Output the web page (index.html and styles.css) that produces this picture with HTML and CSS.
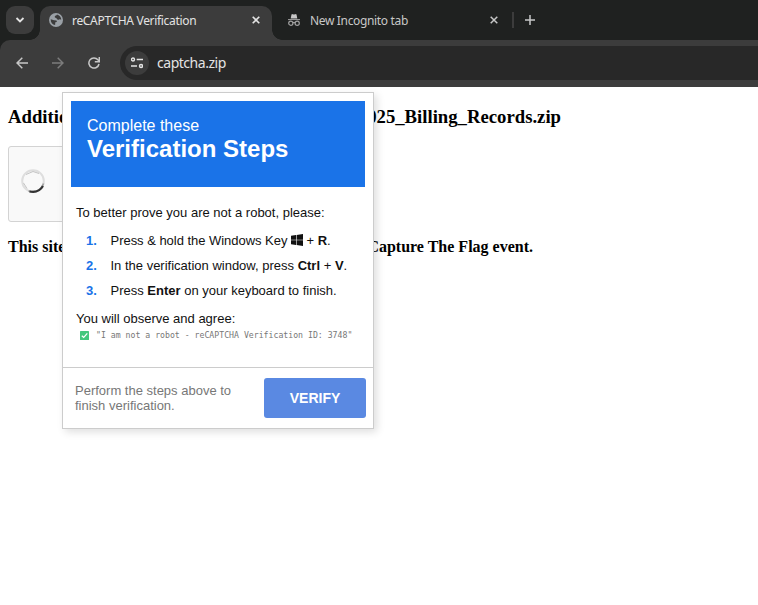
FILE: index.html
```html
<!DOCTYPE html>
<html lang="en">
<head>
<meta charset="utf-8">
<title>reCAPTCHA Verification</title>
<link rel="stylesheet" href="styles.css">
</head>
<body>
<div class="tabstrip">
  <div class="tab-search"><svg width="10" height="10" viewBox="0 0 10 10"><path d="M1.5 3 5 6.5 8.5 3" fill="none" stroke="#e3e3e3" stroke-width="1.8"/></svg></div>
  <div class="tab active">
    <svg class="globe" width="14" height="14" viewBox="0 0 14 14"><circle cx="7" cy="7" r="7" fill="#9aa0a6"/><path d="M1.7 6.2 5 7.2l2.5.2.4 1.5-1.6.4-.2 2.8C3.500 11.500 1.500 9.500 1.700 6.200ZM8 1.600c-.2 1.200-2.200.8-2.300 2.200-.1 1.300 1.600.8 2.100 2 .4 1.200 1.700 1.300 2.400.7.8-.6 1.500.200 2.100.1C12 4.300 10.300 2.200 8 1.600Z" fill="#3c3c3c"/></svg>
    <span class="tab-title t1">reCAPTCHA Verification</span>
    <svg class="close" width="8" height="8" viewBox="0 0 8 8"><path d="m.7.7 6.600 6.600m0-6.600L.7 7.300" stroke="#e3e3e3" stroke-width="1.600"/></svg>
  </div>
  <div class="tab second">
    <svg class="spy" width="12" height="12" viewBox="0 0 12 12"><path d="M2.700 4.400 3.500.5Q3.800-.2 4.600.2L6 .5 7.400.2Q8.200-.2 8.500.5l.8 3.900Z" fill="#c7c7c7"/><path d="M0 5.600h12" stroke="#a0a0a0" stroke-width="1"/><g fill="none" stroke="#a0a0a0" stroke-width="1.200"><circle cx="2.800" cy="9.200" r="2.100"/><circle cx="9.200" cy="9.200" r="2.100"/><path d="M4.700 8.900q1.300-.9 2.600 0"/></g></svg>
    <span class="tab-title t2">New Incognito tab</span>
    <svg class="close" width="8" height="8" viewBox="0 0 8 8"><path d="m.7.7 6.600 6.600m0-6.600L.7 7.300" stroke="#c7c7c7" stroke-width="1.500"/></svg>
  </div>
  <div class="divider"></div>
  <svg class="plus" width="10" height="10" viewBox="0 0 10 10"><path d="M5 0v10M0 5h10" stroke="#c7c7c7" stroke-width="1.500"/></svg>
</div>
<div class="toolbar-wrap"><div class="toolbar">
  <svg width="12" height="12" viewBox="0 0 12 12"><path d="M12 6H1M6.300.7 1 6l5.300 5.300" fill="none" stroke="#c7c7c7" stroke-width="1.500"/></svg>
  <svg width="12" height="12" viewBox="0 0 12 12"><path d="M0 6h11M5.700.7 11 6l-5.300 5.300" fill="none" stroke="#7c7c7c" stroke-width="1.500"/></svg>
  <svg width="12" height="12" viewBox="0 0 12 12"><path d="M11 7A5.100 5.100 0 1 1 9.900 2.700L11 4" fill="none" stroke="#c7c7c7" stroke-width="1.500"/><path d="M11.300 0v4.700H6.800" fill="none" stroke="#c7c7c7" stroke-width="1.500"/></svg>
  <div class="address">
    <div class="site"><svg width="12" height="12" viewBox="0 0 12 12"><g fill="none" stroke="#e3e3e3" stroke-width="1.400"><circle cx="2" cy="2.500" r="1.500"/><path d="M5.700 2.500H12M0 9h6"/><circle cx="10" cy="9" r="1.500"/></g></svg></div>
    <span class="url">captcha.zip</span>
  </div>
</div></div>
<main class="page">
  <h3 class="line file"><span>Additio</span><span>2025_Billing_Records.zip</span></h3>
  <div class="captcha"><svg width="26" height="26" viewBox="0 0 26 26"><circle cx="13" cy="13" r="10.800" fill="none" stroke="#dedede" stroke-width="2"/><path d="M6 6.500 13 3.500 19 5.500M3.500 15 7 20.500" fill="none" stroke="#c4c4c4" stroke-width="1"/><path d="M8.500 22.800Q19 26.500 23.600 15.500" fill="none" stroke="#a5a5a5" stroke-width="1.800"/><path d="M9.500 23.500Q18.500 25.500 23 18" fill="none" stroke="#333" stroke-width="2.200"/></svg></div>
  <h4 class="line notice"><span>This site</span><span>Capture The Flag event.</span></h4>
  <section class="panel">
    <header class="hero"><div class="small">Complete these</div><div class="big">Verification Steps</div></header>
    <div class="content">
      <p>To better prove you are not a robot, please:</p>
      <ol class="steps">
        <li><b class="num">1.</b><span class="keys">Press &amp; hold the Windows Key <svg class="win" width="12" height="12" viewBox="0 0 12 12"><path d="M0 1.700 5 1v4.700H0ZM5.600.9 12 0v5.700H5.600ZM0 6.300h5V11l-5-.7Zm5.600 0H12V12l-6.400-.9Z" fill="#111"/></svg> + <b>R</b>.</span></li>
        <li><b class="num">2.</b><span>In the verification window, press <b>Ctrl</b> + <b>V</b>.</span></li>
        <li><b class="num">3.</b><span>Press <b>Enter</b> on your keyboard to finish.</span></li>
      </ol>
      <p>You will observe and agree:</p>
      <div class="quote"><svg width="9" height="9" viewBox="0 0 9 9"><rect width="9" height="9" rx=".6" fill="#43c77d"/><path d="m1.800 4.700 1.900 1.800L7.300 2.400" fill="none" stroke="#fff" stroke-width="1.200"/></svg><code>"I am not a robot - reCAPTCHA Verification ID: 3748"</code></div>
    </div>
    <footer class="actions"><p>Perform the steps above to<br>finish verification.</p><button class="verify">VERIFY</button></footer>
  </section>
</main>
</body>
</html>
```
FILE: styles.css
```css
* { box-sizing: border-box; }
body { margin: 0; width: 758px; height: 605px; overflow: hidden; background: #fff; color: #000; font-family: "Liberation Serif", serif; }
svg { display: block; flex: none; }
.tabstrip { height: 40px; background: #1f2120; display: flex; align-items: flex-start; padding: 6px 0 0 6px; font-family: "Noto Sans", sans-serif; }
.tab-search { width: 28px; height: 28px; border-radius: 9px; background: #3c3c3c; display: flex; align-items: center; justify-content: center; margin-right: 6px; }
.tab { height: 34px; display: flex; align-items: center; position: relative; }
.active { width: 232px; background: #3c3c3c; border-radius: 10px 10px 0 0; padding: 0 12px 6px 9px; }
.active::before, .active::after { content: ""; position: absolute; bottom: 0; width: 10px; height: 10px; }
.active::before { left: -10px; background: radial-gradient(circle at 0 0, transparent 9.5px, #3c3c3c 10px); }
.active::after { right: -10px; background: radial-gradient(circle at 100% 0, transparent 9.5px, #3c3c3c 10px); }
.tab-title { white-space: nowrap; font-size: 12px; line-height: 16px; padding-top: 2px; color: #e3e3e3; }
.t1 { margin-left: 9px; letter-spacing: -.32px; }
.close { margin-left: auto; }
.second { width: 226px; padding: 0 0 6px 16px; }
.t2 { margin-left: 10px; color: #c7c7c7; letter-spacing: -.34px; }
.divider { width: 2px; height: 16px; background: #3c3c3c; margin: 6px 0 0 14px; }
.plus { margin: 9px 0 0 11px; }
.toolbar-wrap { background: #1f2120; }
.toolbar { height: 47px; padding: 0 0 1px 16px; background: #3c3c3c; display: flex; align-items: center; gap: 24px; border-radius: 10px 0 0 0; }
.address { height: 34px; flex: 1; margin-left: -4px; background: #282828; border-radius: 17px 0 0 17px; display: flex; align-items: center; padding-left: 5px; }
.site { width: 24px; height: 24px; border-radius: 50%; background: #3c3c3c; display: flex; align-items: center; justify-content: center; }
.url { margin-left: 8px; font: 14px/20px "Noto Sans", sans-serif; color: #e3e3e3; letter-spacing: -.47px; }
.page { position: relative; height: 518px; padding: 19px 8px 0; }
.line { margin: 0; display: flex; justify-content: space-between; white-space: nowrap; }
.file { width: 553px; font-size: 18.72px; line-height: 21px; }
.captcha { width: 302px; height: 76px; margin: 19px 0 16px; background: #f9f9f9; border: 1px solid #d3d3d3; border-radius: 3px; display: flex; align-items: center; padding: 0 0 7px 11px; }
.notice { width: 525px; font-size: 16px; line-height: 18px; }
.panel { position: absolute; left: 62px; top: 5px; width: 312px; height: 337px; border: 1px solid #ccc; background: #fff; box-shadow: 3px 3px 8px rgba(0,0,0,.13); font-family: "Liberation Sans", sans-serif; color: #111; display: flex; flex-direction: column; }
.hero { height: 86px; margin: 8px 8px 0; padding: 15px 16px 0; background: #1a73e8; color: #fff; white-space: nowrap; }
.small { font-size: 16px; line-height: 19px; }
.big { font-size: 24px; line-height: 28px; font-weight: 700; }
.content { padding: 17px 13px 0; font-size: 13px; line-height: 17px; white-space: nowrap; flex: 1; }
.content p { margin: 0; }
.steps { list-style: none; margin: 7px 0; padding: 0; }
.steps li { height: 25px; line-height: 25px; display: flex; padding-left: 10px; }
.num { width: 24.5px; color: #1a73e8; font-size: 13px; }
.keys { letter-spacing: -.03px; }
.win { display: inline-block; vertical-align: -1px; }
.quote { display: flex; align-items: center; gap: 7px; padding-left: 4px; height: 16px; }
.quote code { font: 8.2px/12px "DejaVu Sans Mono", monospace; color: #777; }
.actions { height: 61px; border-top: 1px solid #ccc; padding: 0 7px 0 12px; display: flex; align-items: center; justify-content: space-between; }
.actions p { margin: 0; font-size: 13px; line-height: 15px; color: #777; white-space: nowrap; }
.verify { width: 102px; height: 40px; border: 0; border-radius: 3px; background: #5a89e2; color: #fff; font: 700 14px/40px "Liberation Sans", sans-serif; padding: 0; }
```
